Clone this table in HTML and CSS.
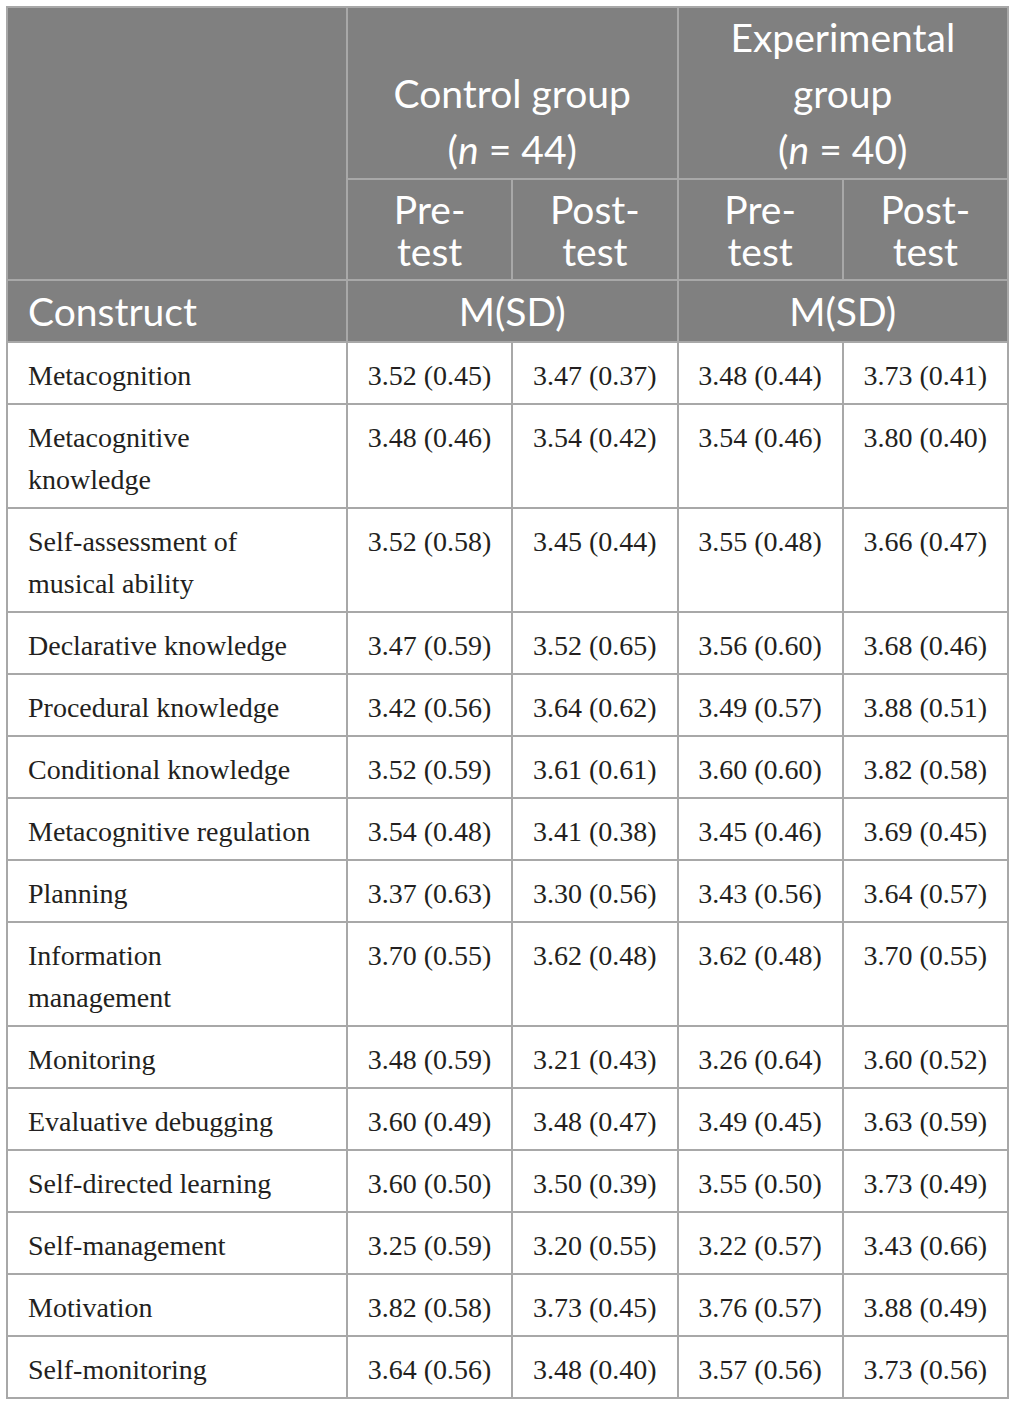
FILE: index.html
```html
<!DOCTYPE html>
<html>
<head>
<meta charset="utf-8">
<link rel="stylesheet" href="styles.css">
</head>
<body>
<table class="data">
  <colgroup>
    <col class="c-first">
    <col class="c-num"><col class="c-num"><col class="c-num"><col class="c-num">
  </colgroup>
  <thead>
    <tr class="h-group">
      <th rowspan="2" class="h-blank"></th>
      <th colspan="2" class="h-grp">Control group<br>(<i>n</i> = 44)</th>
      <th colspan="2" class="h-grp">Experimental<br>group<br>(<i>n</i> = 40)</th>
    </tr>
    <tr class="h-test">
      <th>Pre-<br>test</th>
      <th>Post-<br>test</th>
      <th>Pre-<br>test</th>
      <th>Post-<br>test</th>
    </tr>
    <tr class="h-construct">
      <th class="h-left">Construct</th>
      <th colspan="2">M(SD)</th>
      <th colspan="2">M(SD)</th>
    </tr>
  </thead>
  <tbody>
    <tr><td>Metacognition</td><td>3.52 (0.45)</td><td>3.47 (0.37)</td><td>3.48 (0.44)</td><td>3.73 (0.41)</td></tr>
    <tr><td>Metacognitive<br>knowledge</td><td>3.48 (0.46)</td><td>3.54 (0.42)</td><td>3.54 (0.46)</td><td>3.80 (0.40)</td></tr>
    <tr><td>Self-assessment of<br>musical ability</td><td>3.52 (0.58)</td><td>3.45 (0.44)</td><td>3.55 (0.48)</td><td>3.66 (0.47)</td></tr>
    <tr><td>Declarative knowledge</td><td>3.47 (0.59)</td><td>3.52 (0.65)</td><td>3.56 (0.60)</td><td>3.68 (0.46)</td></tr>
    <tr><td>Procedural knowledge</td><td>3.42 (0.56)</td><td>3.64 (0.62)</td><td>3.49 (0.57)</td><td>3.88 (0.51)</td></tr>
    <tr><td>Conditional knowledge</td><td>3.52 (0.59)</td><td>3.61 (0.61)</td><td>3.60 (0.60)</td><td>3.82 (0.58)</td></tr>
    <tr><td>Metacognitive regulation</td><td>3.54 (0.48)</td><td>3.41 (0.38)</td><td>3.45 (0.46)</td><td>3.69 (0.45)</td></tr>
    <tr><td>Planning</td><td>3.37 (0.63)</td><td>3.30 (0.56)</td><td>3.43 (0.56)</td><td>3.64 (0.57)</td></tr>
    <tr><td>Information<br>management</td><td>3.70 (0.55)</td><td>3.62 (0.48)</td><td>3.62 (0.48)</td><td>3.70 (0.55)</td></tr>
    <tr><td>Monitoring</td><td>3.48 (0.59)</td><td>3.21 (0.43)</td><td>3.26 (0.64)</td><td>3.60 (0.52)</td></tr>
    <tr><td>Evaluative debugging</td><td>3.60 (0.49)</td><td>3.48 (0.47)</td><td>3.49 (0.45)</td><td>3.63 (0.59)</td></tr>
    <tr><td>Self-directed learning</td><td>3.60 (0.50)</td><td>3.50 (0.39)</td><td>3.55 (0.50)</td><td>3.73 (0.49)</td></tr>
    <tr><td>Self-management</td><td>3.25 (0.59)</td><td>3.20 (0.55)</td><td>3.22 (0.57)</td><td>3.43 (0.66)</td></tr>
    <tr><td>Motivation</td><td>3.82 (0.58)</td><td>3.73 (0.45)</td><td>3.76 (0.57)</td><td>3.88 (0.49)</td></tr>
    <tr><td>Self-monitoring</td><td>3.64 (0.56)</td><td>3.48 (0.40)</td><td>3.57 (0.56)</td><td>3.73 (0.56)</td></tr>
  </tbody>
</table>
</body>
</html>
```

FILE: styles.css
```css
html, body {
  margin: 0;
  padding: 0;
  background: #ffffff;
}
body {
  padding: 6px 0 0 6px;
}
.data {
  border-collapse: collapse;
  table-layout: fixed;
  width: 1001px;
}
.c-first { width: 340px; }
.c-num { width: 165.25px; }

.data th, .data td {
  border: 2px solid #a8a8a8;
}

.data thead th {
  background: #808080;
  color: #ffffff;
  font-family: Lato, "Open Sans", sans-serif;
  font-weight: 400;
  font-size: 39px;
  text-align: center;
  padding: 0 6px;
}
.data thead i { font-style: italic; }

.data .h-group th {
  line-height: 56px;
  height: 166px;
  padding-top: 1px;
  padding-bottom: 1px;
  vertical-align: bottom;
}
.data .h-test th {
  line-height: 42px;
  padding-top: 8px;
  padding-bottom: 7px;
}
.data .h-construct th {
  line-height: 42px;
  padding-top: 9px;
  padding-bottom: 9px;
}
.data thead th.h-left {
  text-align: left;
  padding-left: 20px;
}

.data td {
  font-family: "Liberation Serif", "Times New Roman", serif;
  font-size: 28px;
  line-height: 42px;
  color: #231f20;
  padding: 12px 10px 6px;
  vertical-align: top;
  text-align: center;
  white-space: nowrap;
}
.data td:first-child {
  text-align: left;
  padding-left: 20px;
}
```
